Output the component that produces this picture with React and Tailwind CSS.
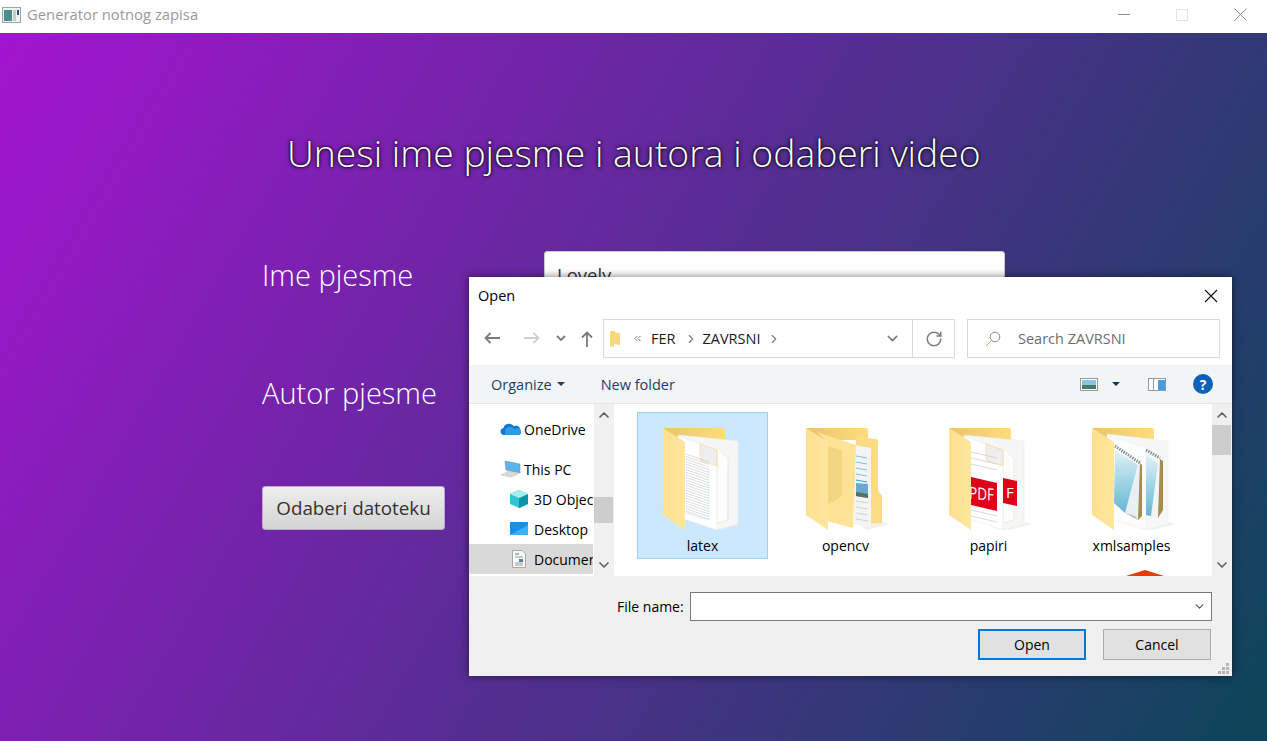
import React from 'react';
import { ChevronDown, ChevronRight, ChevronUp, ChevronsLeft, RotateCw } from 'lucide-react';

const ui = "font-['Open_Sans','Noto_Sans',sans-serif]";

// shared folder shell: back tab, page layer and front flap
function Folder({ children }) {
  return (
    <svg width="82" height="106" viewBox="0 0 82 106">
      <defs>
        <linearGradient id="flapFill" x1="0" x2="1" y1="0" y2="0">
          <stop offset="0" stopColor="#ffe08f" />
          <stop offset="1" stopColor="#fde79e" />
        </linearGradient>
        <linearGradient id="tabFill" x1="0" x2="1" y1="0" y2="0">
          <stop offset="0" stopColor="#e8c56c" />
          <stop offset="1" stopColor="#ffdd7c" />
        </linearGradient>
        <linearGradient id="padFill" x1="0" x2="0" y1="0" y2="1">
          <stop offset="0" stopColor="#e2f2f6" />
          <stop offset="0.5" stopColor="#9fd5e6" />
          <stop offset="1" stopColor="#66b5d2" />
        </linearGradient>
      </defs>
      <path d="M0 0H60q2 0 2 2V12H8z" fill="url(#tabFill)" />
      <path d="M54 96L76 94L84 96L60 102z" fill="#e3e3e3" opacity="0.5" />
      {children}
      <path d="M0 0L22 14V102L0 87z" fill="url(#flapFill)" />
    </svg>
  );
}

function Pages() {
  return (
    <g>
      <path d="M15 7L75 13V96L54 102L15 88z" fill="#f6f6f6" stroke="#ececec" strokeWidth="0.6" />
      <path d="M54 19L65 31V92L54 95z" fill="#fdfdfd" stroke="#f0dfae" strokeWidth="0.5" />
      <path d="M15 8L54 22V102L18 90z" fill="#ffffff" stroke="#ebebeb" strokeWidth="0.6" />
      <path d="M37 16L54 22V38L41 34q-4-1-4-4z" fill="#eeeeee" stroke="#f2d98f" strokeWidth="0.6" />
    </g>
  );
}

function LatexIcon() {
  const rows = [];
  for (let y = 34; y < 92; y += 2.6) rows.push(y);
  return (
    <Folder>
      <Pages />
      {rows.map((y) => (
        <path key={y} d={`M23 ${y - 8}L46 ${y}`} stroke="#c4c4c4" strokeWidth="0.6" />
      ))}
      <path d="M46 40V92L22 85" fill="none" stroke="#cfe6f2" strokeWidth="0.6" />
      <path d="M65 38V92" stroke="#cfe6f2" strokeWidth="0.6" />
    </Folder>
  );
}

function OpencvIcon() {
  return (
    <Folder>
      <path d="M50 9L70 11q2 0 2 2V62L76 68V95L48 96z" fill="#fbdc84" />
      <path d="M48 17L65 20V99L48 96z" fill="#f4f4f4" />
      {[29, 35, 41, 47, 53].map((y, i) => (
        <path key={y} d={`M50 ${y - 1}L61 ${y + 1}`} stroke={i === 4 ? '#2f9fe0' : '#7cc3ea'} strokeWidth="1" />
      ))}
      <path d="M50 55L62 56V70L50 68z" fill="#6aa8cf" />
      <path d="M50 64L62 66V70L50 68z" fill="#55705b" />
      {[74, 80, 86, 92].map((y) => (
        <path key={y} d={`M50 ${y - 1}L62 ${y + 1}`} stroke="#c4c4c4" strokeWidth="0.7" />
      ))}
      <path d="M11 4L50 17L47 100L21 93L21 14z" fill="#fee296" />
      <path d="M21 18L36 22V68L21 77z" fill="#f3d681" />
    </Folder>
  );
}

function PapiriIcon() {
  return (
    <Folder>
      <Pages />
      {[30, 36, 42, 88, 94].map((y) => (
        <path key={y} d={`M22 ${y - 6}L48 ${y}`} stroke="#c9c9c9" strokeWidth="0.7" />
      ))}
      <path d="M54 50L68 53V78L54 75z" fill="#e00017" />
      <path d="M22 49L48 55V83L22 77z" fill="#e00017" />
      <text x="20" y="70" fontSize="17" fill="#ffffff" fontFamily="Open Sans, sans-serif" textLength="25" lengthAdjust="spacingAndGlyphs" transform="skewY(5) translate(0 -1)">PDF</text>
      <text x="57" y="70" fontSize="15" fill="#ffffff" fontFamily="Open Sans, sans-serif">F</text>
    </Folder>
  );
}

function XmlIcon() {
  return (
    <Folder>
      <path d="M15 6L76 13V96L54 102L15 88z" fill="#f7f7f7" stroke="#ededed" strokeWidth="0.5" />
      <path d="M54 19V102L15 90V8z" fill="#fcfcfc" stroke="#ededed" strokeWidth="0.5" />
      <path d="M68 31L71 34V82L66 90L54 88V28z" fill="#f1f5f7" />
      <path d="M54 27L66 35L59 88L54 87z" fill="url(#padFill)" />
      <path d="M68 31L71 33V82L66 90z" fill="#a98b4c" />
      <path d="M54 22L68 30" stroke="#7d8c92" strokeWidth="3" strokeDasharray="1.4 1.2" />
      <path d="M47 36L50 38V88L46 92L33 85z" fill="#e9eff2" />
      <path d="M23 22L46 37L33 85L22 75z" fill="url(#padFill)" />
      <path d="M48 35L50 37V88L46 92z" fill="#a98b4c" />
      <path d="M33 85L46 92L43 88z" fill="#bdbdbd" />
      <path d="M23 18L48 35" stroke="#7d8c92" strokeWidth="3" strokeDasharray="1.4 1.2" />
    </Folder>
  );
}

function OneDriveIcon() {
  return (
    <svg width="22" height="14" viewBox="0 0 22 14">
      <path d="M4 13a3.6 3.6 0 0 1-.6-7.1A6 6 0 0 1 14 4.200a4 4 0 0 1 6 4.300A2.600 2.600 0 0 1 19 13z" fill="#0f78d4" />
      <path d="M5 9a5 5 0 0 1 9-2h1a3.600 3.600 0 0 1 6 1.500q1 3-2 4.500H5z" fill="#2b9be6" />
    </svg>
  );
}

function ThisPcIcon() {
  return (
    <svg width="22" height="18" viewBox="0 0 22 18">
      <path d="M5 1L20 4V13L6 10z" fill="#5cb3ec" stroke="#7b8f9c" strokeWidth="0.6" />
      <path d="M1 15L9 11L18 14L11 17z" fill="#d9d9d9" stroke="#bdbdbd" strokeWidth="0.5" />
    </svg>
  );
}

function CubeIcon() {
  return (
    <svg width="18" height="18" viewBox="0 0 18 18">
      <path d="M9 0L18 4V14L9 18L0 14V4z" fill="#31c4d3" />
      <path d="M9 8L18 4V14L9 18z" fill="#0d93a6" />
      <path d="M9 0L18 4L9 8L0 4z" fill="#a4eef0" />
    </svg>
  );
}

function DesktopIcon() {
  return (
    <svg width="18" height="14" viewBox="0 0 18 14">
      <rect width="18" height="13" fill="#1490e8" />
      <path d="M0 13L18 3V13z" fill="#3fb0f5" />
    </svg>
  );
}

function DocumentsIcon() {
  return (
    <svg width="14" height="18" viewBox="0 0 14 18">
      <path d="M.5.5H10L13.500 4V17.500H.5z" fill="#fafafa" stroke="#a7a7a7" />
      <path d="M3 4H7" stroke="#2a80c8" />
      <path d="M3 7H11M3 13H11M3 15H11" stroke="#9a9a9a" />
      <rect x="7" y="9" width="4" height="3" fill="#5a7f9e" />
    </svg>
  );
}

function Tile({ name, selected, children }) {
  return (
    <div className={`w-[131px] h-[147px] flex flex-col items-center border pt-[15px] ${selected ? 'bg-[#cce8ff] border-[#99d1ff]' : 'border-transparent'}`}>
      <div className="h-[106px] w-[82px] ml-[2px]">{children}</div>
      <span className="text-[14px] leading-[20px] text-black mt-[2px]">{name}</span>
    </div>
  );
}

function NavRow({ icon, label, sub, active }) {
  return (
    <div className={`h-[30px] flex items-center overflow-hidden whitespace-nowrap ${sub ? 'pl-[37px]' : 'pl-[29px]'} ${active ? 'bg-[#d9d9d9]' : ''}`}>
      <span className="w-[25px] flex justify-center shrink-0">{icon}</span>
      <span className={`text-[14px] text-black ${sub ? 'ml-[3px]' : 'ml-[1px]'}`}>{label}</span>
    </div>
  );
}

function Scrollbar({ thumb, thumbClass }) {
  return (
    <div className="w-[20px] h-full bg-[#f0f0f0] flex flex-col items-center justify-between py-[3px] relative">
      <ChevronUp size={16} strokeWidth={2.5} className="text-[#606060]" />
      <div className={`absolute left-0 w-[19px] bg-[#cdcdcd] ${thumb} ${thumbClass}`} />
      <ChevronDown size={16} strokeWidth={2.5} className="text-[#606060]" />
    </div>
  );
}

function FileDialog() {
  return (
    <div className={`absolute left-[469px] top-[244px] w-[763px] h-[399px] bg-white flex flex-col shadow-[0_0_8px_rgba(0,0,0,0.55)] ${ui}`}>
      <div className="h-[42px] shrink-0 flex items-center justify-between pl-[9px] pr-[14px] pb-[5px]">
        <span className="text-[14.5px] text-black">Open</span>
        <svg width="14" height="14" viewBox="0 0 14 14" stroke="#111" strokeWidth="1.100">
          <path d="M1 1L13 13M13 1L1 13" />
        </svg>
      </div>

      <div className="h-[46px] shrink-0 flex items-start pl-[15px] pr-[12px]">
        <div className="flex items-center h-[38px] w-[119px]">
          <svg width="16" height="12" viewBox="0 0 16 12" fill="none" stroke="#7a7a7a" strokeWidth="1.800">
            <path d="M16 6H1.500M6.500 1L1.500 6L6.500 11" />
          </svg>
          <svg width="16" height="12" viewBox="0 0 16 12" fill="none" stroke="#d0d0d0" strokeWidth="1.800" className="ml-[24px]">
            <path d="M0 6H14.500M9.500 1L14.500 6L9.500 11" />
          </svg>
          <svg width="10" height="6" viewBox="0 0 10 6" fill="none" stroke="#7a7a7a" strokeWidth="1.800" className="ml-[16px]">
            <path d="M1 1L5 5L9 1" />
          </svg>
          <svg width="12" height="16" viewBox="0 0 12 16" fill="none" stroke="#7a7a7a" strokeWidth="1.800" className="ml-[15px] mt-[2px]">
            <path d="M6 16V1.500M1 6.500L6 1.500L11 6.500" />
          </svg>
        </div>
        <div className="w-[352px] h-[39px] border border-[#d9d9d9] flex items-center text-[14.5px] text-[#1a1a1a]">
          <svg width="12" height="18" viewBox="0 0 12 18" className="ml-[5px]">
            <path d="M1 1H6L7 3H11V15L5 14V17L1 16z" fill="#f9d976" />
          </svg>
          <ChevronsLeft size={11} className="ml-[11px] text-[#777]" />
          <span className="ml-[8px]">FER</span>
          <ChevronRight size={14} strokeWidth={2} className="ml-[8px] text-[#808080]" />
          <span className="ml-[5px]">ZAVRSNI</span>
          <ChevronRight size={14} strokeWidth={2} className="ml-[7px] text-[#808080]" />
          <ChevronDown size={17} strokeWidth={2} className="ml-auto mr-[11px] text-[#777]" />
          <div className="w-[42px] h-full border-l border-[#d9d9d9] flex items-center justify-center">
            <RotateCw size={18} strokeWidth={2.100} className="text-[#7f7f7f]" />
          </div>
        </div>
        <div className="w-[253px] h-[39px] ml-[12px] border border-[#d9d9d9] flex items-center text-[14.5px] text-[#6d6d6d]">
          <svg width="16" height="16" viewBox="0 0 16 16" fill="none" stroke="#8a8a8a" className="ml-[17px]">
            <circle cx="10" cy="6" r="4.800" />
            <path d="M6.500 9.500L1 15" stroke="#c99a6b" />
          </svg>
          <span className="ml-[17px]">Search ZAVRSNI</span>
        </div>
      </div>

      <div className="h-[39px] shrink-0 bg-[#f3f4f6] border-b border-[#e6e6e6] flex items-center text-[14.5px] text-[#1d3f63] pl-[22px] pr-[19px]">
        <span className="mt-[1px]">Organize</span>
        <span className="ml-[5px] w-0 h-0 border-x-[4px] border-x-transparent border-t-[4px] border-t-[#1d3f63]" />
        <span className="ml-[36px] mt-[1px]">New folder</span>
        <svg width="18" height="13" viewBox="0 0 18 13" className="ml-auto">
          <rect x=".5" y=".5" width="17" height="12" fill="#fff" stroke="#9a9a9a" />
          <rect x="2" y="2" width="14" height="5" fill="#8fc3e6" />
          <rect x="2" y="7" width="14" height="4" fill="#3f7d63" />
        </svg>
        <span className="ml-[14px] w-0 h-0 border-x-[4px] border-x-transparent border-t-[4px] border-t-[#17345c]" />
        <svg width="18" height="13" viewBox="0 0 18 13" className="ml-[28px]">
          <rect x=".5" y=".5" width="17" height="12" fill="#fff" stroke="#8c9aa6" />
          <rect x="10" y="2" width="7" height="10" fill="#4a9ce0" />
          <rect x="5" y="1" width="1" height="11" fill="#8c9aa6" />
        </svg>
        <span className="ml-[27px] w-[20px] h-[20px] rounded-full bg-[#0b63b8] text-white text-[14px] font-bold flex items-center justify-center">?</span>
      </div>

      <div className="h-[172px] shrink-0 flex overflow-hidden">
        <div className="w-[124px] shrink-0 pt-[10px]">
          <NavRow icon={<OneDriveIcon />} label="OneDrive" />
          <div className="h-[10px]" />
          <NavRow icon={<ThisPcIcon />} label="This PC" />
          <NavRow icon={<CubeIcon />} label="3D Objects" sub />
          <NavRow icon={<DesktopIcon />} label="Desktop" sub />
          <NavRow icon={<DocumentsIcon />} label="Documents" sub active />
        </div>
        <div className="w-px bg-white" />
        <Scrollbar thumb="top-[93px]" thumbClass="h-[26px]" />
        <div className="w-px bg-white" />
        <div className="flex-1 relative pl-[22px] pt-[8px] flex gap-[12px] overflow-hidden">
          <Tile name="latex" selected><LatexIcon /></Tile>
          <Tile name="opencv"><OpencvIcon /></Tile>
          <Tile name="papiri"><PapiriIcon /></Tile>
          <Tile name="xmlsamples"><XmlIcon /></Tile>
          <svg width="40" height="6" viewBox="0 0 40 6" className="absolute left-[511px] bottom-0">
            <path d="M0 6L19 0L38 6z" fill="#e63c00" />
          </svg>
        </div>
        <Scrollbar thumb="top-[21px]" thumbClass="h-[30px]" />
      </div>

      <div className="flex-1 bg-[#f0f0f0] relative pt-[16px] pl-[148px] pr-[20px]">
        <div className="flex items-center h-[29px] text-[14px] text-black">
          <span className="w-[73px] whitespace-nowrap">File name:</span>
          <div className="flex-1 h-[29px] bg-white border border-[#7a7a7a] flex items-center justify-end pr-[5px]">
            <ChevronDown size={13} className="text-[#555]" />
          </div>
        </div>
        <div className="flex justify-end gap-[17px] mt-[8px] text-[14px] text-black pr-[1px]">
          <button className="w-[108px] h-[31px] bg-[#e1e1e1] border-2 border-[#0078d7]">Open</button>
          <button className="w-[108px] h-[31px] bg-[#e1e1e1] border border-[#adadad]">Cancel</button>
        </div>
        <svg width="12" height="12" viewBox="0 0 12 12" fill="#b5b5b5" className="absolute right-[2px] bottom-[1px]">
          <rect x="8" y="0" width="3" height="3" />
          <rect x="4" y="4" width="3" height="3" />
          <rect x="8" y="4" width="3" height="3" />
          <rect x="0" y="8" width="3" height="3" />
          <rect x="4" y="8" width="3" height="3" />
          <rect x="8" y="8" width="3" height="3" />
        </svg>
      </div>
    </div>
  );
}

function FormRow({ label, value }) {
  return (
    <div className="flex items-center h-[48px]">
      <span className="w-[282px] text-[29px] text-white font-light">{label}</span>
      <div className="w-[461px] h-full rounded-[3px] bg-white border border-[#c8c8c8] flex items-center pl-[12px] text-[18.500px] text-[#333]">{value}</div>
    </div>
  );
}

export default function App() {
  return (
    <div className={`h-[741px] w-[1267px] overflow-hidden flex flex-col ${ui}`}>
      <div className="h-[33px] shrink-0 bg-white flex items-center pb-[4px]">
        <svg width="19" height="16" viewBox="0 0 19 16" className="ml-[2px]">
          <rect x=".5" y=".5" width="18" height="15" fill="#eef2f2" stroke="#9aa6a6" />
          <rect x="2" y="3" width="8" height="11" fill="#4a8f8a" />
          <rect x="11" y="3" width="3" height="11" fill="#c3ced3" />
          <rect x="15" y="3" width="2" height="5" fill="#30566b" />
        </svg>
        <span className="ml-[6px] text-[14.800px] text-[#9a9a9a]">Generator notnog zapisa</span>
        <div className="ml-auto flex items-center">
          <span className="w-[12px] h-px bg-[#8f8f8f]" />
          <span className="ml-[46px] w-[12px] h-[12px] border border-[#e5e5e5]" />
          <svg width="13" height="13" viewBox="0 0 13 13" stroke="#8f8f8f" className="ml-[46px] mr-[20px]">
            <path d="M.5.5L12.500 12.500M12.500.5L.5 12.500" />
          </svg>
        </div>
      </div>

      <div className="relative flex-1 bg-[linear-gradient(120deg,#a314d0,#0c4558)] pl-[262px] pt-[95px]">
        <h1 className="ml-[25px] h-[50px] leading-[50px] text-[37.300px] font-light text-white whitespace-nowrap [text-shadow:0_0_4px_#000,0_0_2px_#000]">Unesi ime pjesme i autora i odaberi video</h1>
        <div className="mt-[73px] flex flex-col gap-[70px]">
          <FormRow label="Ime pjesme" value="Lovely" />
          <FormRow label="Autor pjesme" value="" />
        </div>
        <button className="mt-[69px] w-[183px] h-[44px] rounded-[3px] bg-[linear-gradient(#eeeeee,#d4d4d4)] border border-[#b9a6c9] text-[18.800px] text-[#333]">Odaberi datoteku</button>
        <FileDialog />
      </div>
    </div>
  );
}
